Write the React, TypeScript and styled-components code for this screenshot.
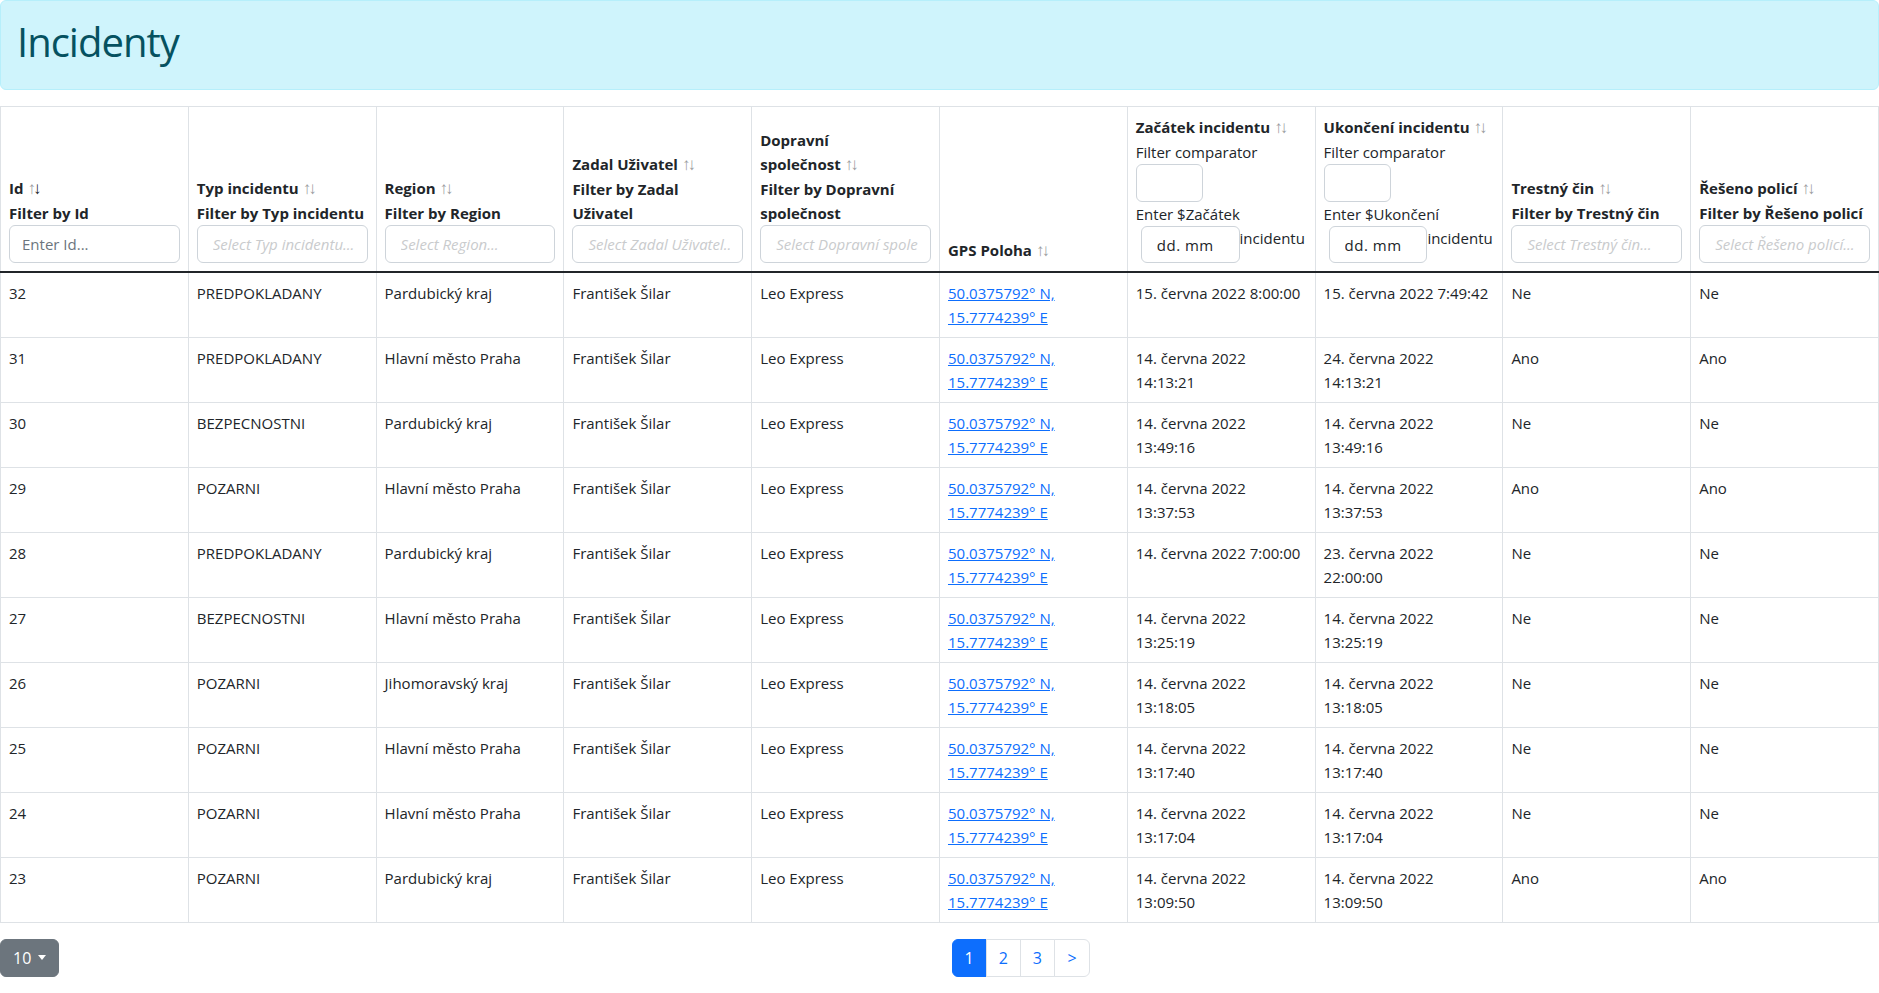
import styled, { createGlobalStyle } from 'styled-components';

const GlobalStyle = createGlobalStyle`
    * {
        box-sizing: border-box;
    }

    body {
        margin: 0;
        font-family: "Open Sans", "Noto Sans", sans-serif;
        color: #212529;
        background: #fff;
    }
`;

const Alert = styled.div`
    background: #cff4fc;
    border: 1px solid #b6effb;
    border-radius: 6px;
    padding: 17px 16px 15px;
    margin-bottom: 16px;
    color: #055160;
`;

const Title = styled.h1`
    margin: 0 0 8px;
    font-size: 40px;
    font-weight: 400;
    line-height: 1.2;
    letter-spacing: -1px;
`;

const Table = styled.table`
    width: 100%;
    table-layout: fixed;
    border-collapse: collapse;
    margin-bottom: 16px;
    font-size: 15px;
    line-height: 24px;
    border: 1px solid #dee2e6;
`;

const Th = styled.th`
    vertical-align: bottom;
    text-align: left;
    padding: 8px;
    border: 1px solid #dee2e6;
    border-bottom: 2px solid #212529;
    font-weight: 700;
`;

const Td = styled.td`
    vertical-align: top;
    padding: 8px;
    border: 1px solid #dee2e6;
`;

const Line = styled.span`
    display: block;
`;

const Caret = styled.span<{ $active?: boolean }>`
    font-family: "Liberation Sans", sans-serif;
    font-weight: 400;
    font-size: 17px;

    &::before {
        content: "\\2191";
        margin-left: 4px;
        opacity: 0.45;
    }

    &::after {
        content: "\\2193";
        margin-left: -3px;
        opacity: ${(p) => (p.$active ? 1 : 0.45)};
    }
`;

const TextInput = styled.input`
    display: block;
    width: 100%;
    height: 38px;
    padding: 6px 12px;
    font-family: inherit;
    font-size: 15px;
    font-weight: 400;
    color: #212529;
    border: 1px solid #ced4da;
    border-radius: 6px;
    background: #fff;

    &::placeholder {
        color: #6c757d;
    }
`;

const SelectBox = styled.div`
    height: 38px;
    padding: 6px 12px 6px 15px;
    border: 1px solid #ced4da;
    border-radius: 6px;
    font-weight: 400;
    font-style: italic;
    color: #c9cbcd;
`;

const SelectText = styled.span`
    display: block;
    white-space: nowrap;
    overflow: hidden;
`;

const DateFilter = styled.div`
    font-weight: 400;
`;

const Comparator = styled.div`
    width: 67px;
    height: 38px;
    border: 1px solid #ced4da;
    border-radius: 6px;
`;

const DateRow = styled.div`
    display: flex;
    align-items: flex-start;
    white-space: nowrap;
`;

const DateInput = styled.div`
    flex: none;
    width: calc(100% - 72px);
    height: 37px;
    margin-left: 5px;
    padding: 6px 0 6px 15px;
    border: 1px solid #ced4da;
    border-radius: 6px;
    color: #212529;
`;

const DateMask = styled.span`
    display: block;
    width: 56px;
    overflow: hidden;
    white-space: nowrap;
    letter-spacing: 0.5px;
`;

const Link = styled.a`
    color: #0d6efd;
    text-decoration: underline;
`;

const Footer = styled.div`
    display: grid;
    grid-template-columns: 1fr 1fr;
    font-size: 16px;
    line-height: 24px;
`;

const FooterCol = styled.div<{ $side: 'left' | 'right' }>`
    padding-${(p) => (p.$side === 'left' ? 'right' : 'left')}: 12px;
`;

const SizeButton = styled.button`
    display: inline-flex;
    align-items: center;
    height: 38px;
    padding: 6px 12px;
    font-family: inherit;
    font-size: 16px;
    line-height: 24px;
    color: #fff;
    background: #6c757d;
    border: 1px solid #6c757d;
    border-radius: 6px;

    &::after {
        content: '';
        margin-left: 7px;
        margin-top: -2px;
        border-top: 5px solid #fff;
        border-left: 4.5px solid transparent;
        border-right: 4.5px solid transparent;
    }
`;

const Pages = styled.ul`
    display: flex;
    list-style: none;
    margin: 0;
    padding: 0;
`;

const PageLink = styled.li<{ $active?: boolean }>`
    padding: 6px 12px;
    margin-left: -1px;
    min-width: 34px;
    text-align: center;
    border: 1px solid ${(p) => (p.$active ? '#0d6efd' : '#dee2e6')};
    background: ${(p) => (p.$active ? '#0d6efd' : '#fff')};
    color: ${(p) => (p.$active ? '#fff' : '#0d6efd')};

    &:first-child {
        margin-left: 0;
        border-radius: 6px 0 0 6px;
    }

    &:last-child {
        min-width: 36px;
        border-radius: 0 6px 6px 0;
    }
`;

type Column = {
    title: string[];
    label?: string[];
    text?: string;
    select?: string;
    date?: string;
    active?: boolean;
};

const columns: Column[] = [
    { title: ['Id'], label: ['Filter by Id'], text: 'Enter Id...', active: true },
    { title: ['Typ incidentu'], label: ['Filter by Typ incidentu'], select: 'Select Typ incidentu...' },
    { title: ['Region'], label: ['Filter by Region'], select: 'Select Region...' },
    { title: ['Zadal Uživatel'], label: ['Filter by Zadal', 'Uživatel'], select: 'Select Zadal Uživatel...' },
    {
        title: ['Dopravní', 'společnost'],
        label: ['Filter by Dopravní', 'společnost'],
        select: 'Select Dopravní společnost...',
    },
    { title: ['GPS Poloha'] },
    { title: ['Začátek incidentu'], date: 'Začátek' },
    { title: ['Ukončení incidentu'], date: 'Ukončení' },
    { title: ['Trestný čin'], label: ['Filter by Trestný čin'], select: 'Select Trestný čin...' },
    { title: ['Řešeno policí'], label: ['Filter by Řešeno policí'], select: 'Select Řešeno policí...' },
];

type Row = [number, string, string, string, string, boolean];

const rows: Row[] = [
    [32, 'PREDPOKLADANY', 'Pardubický kraj', '15. června 2022 8:00:00', '15. června 2022 7:49:42', false],
    [31, 'PREDPOKLADANY', 'Hlavní město Praha', '14. června 2022 14:13:21', '24. června 2022 14:13:21', true],
    [30, 'BEZPECNOSTNI', 'Pardubický kraj', '14. června 2022 13:49:16', '14. června 2022 13:49:16', false],
    [29, 'POZARNI', 'Hlavní město Praha', '14. června 2022 13:37:53', '14. června 2022 13:37:53', true],
    [28, 'PREDPOKLADANY', 'Pardubický kraj', '14. června 2022 7:00:00', '23. června 2022 22:00:00', false],
    [27, 'BEZPECNOSTNI', 'Hlavní město Praha', '14. června 2022 13:25:19', '14. června 2022 13:25:19', false],
    [26, 'POZARNI', 'Jihomoravský kraj', '14. června 2022 13:18:05', '14. června 2022 13:18:05', false],
    [25, 'POZARNI', 'Hlavní město Praha', '14. června 2022 13:17:40', '14. června 2022 13:17:40', false],
    [24, 'POZARNI', 'Hlavní město Praha', '14. června 2022 13:17:04', '14. června 2022 13:17:04', false],
    [23, 'POZARNI', 'Pardubický kraj', '14. června 2022 13:09:50', '14. června 2022 13:09:50', true],
];

function Lines({ lines }: { lines: string[] }) {
    return (
        <>
            {lines.map((l, i) => (i < lines.length - 1 ? <Line key={i}>{l}</Line> : <span key={i}>{l}</span>))}
        </>
    );
}

function DateTime({ value }: { value: string }) {
    const i = value.lastIndexOf(' ');
    const time = value.slice(i + 1);
    return (
        <>
            {value.slice(0, i)}
            {time.length > 7 ? <br /> : ' '}
            {time}
        </>
    );
}

function HeaderCell({ col }: { col: Column }) {
    return (
        <Th>
            <div>
                <Lines lines={col.title} />
                <Caret $active={col.active} />
            </div>
            {col.label && (
                <div>
                    {col.label.map((l) => (
                        <Line key={l}>{l}</Line>
                    ))}
                </div>
            )}
            {col.text && <TextInput placeholder={col.text} />}
            {col.select && (
                <SelectBox>
                    <SelectText>{col.select}</SelectText>
                </SelectBox>
            )}
            {col.date && (
                <DateFilter>
                    <Line>Filter comparator</Line>
                    <Comparator />
                    <Line>Enter ${col.date}</Line>
                    <DateRow>
                        <DateInput>
                            <DateMask>dd. mm. rrrr</DateMask>
                        </DateInput>
                        <span>incidentu</span>
                    </DateRow>
                </DateFilter>
            )}
        </Th>
    );
}

export default function App() {
    return (
        <>
            <GlobalStyle />
            <Alert>
                <Title>Incidenty</Title>
            </Alert>
            <Table>
                <thead>
                    <tr>
                        {columns.map((c) => (
                            <HeaderCell key={c.title.join(' ')} col={c} />
                        ))}
                    </tr>
                </thead>
                <tbody>
                    {rows.map(([id, type, region, start, end, crime]) => (
                        <tr key={id}>
                            <Td>{id}</Td>
                            <Td>{type}</Td>
                            <Td>{region}</Td>
                            <Td>František Šilar</Td>
                            <Td>Leo Express</Td>
                            <Td>
                                <Link href="#">50.0375792° N, 15.7774239° E</Link>
                            </Td>
                            <Td>
                                <DateTime value={start} />
                            </Td>
                            <Td>
                                <DateTime value={end} />
                            </Td>
                            <Td>{crime ? 'Ano' : 'Ne'}</Td>
                            <Td>{crime ? 'Ano' : 'Ne'}</Td>
                        </tr>
                    ))}
                </tbody>
            </Table>
            <Footer>
                <FooterCol $side="left">
                    <SizeButton>10</SizeButton>
                </FooterCol>
                <FooterCol $side="right">
                    <Pages>
                        <PageLink $active>1</PageLink>
                        <PageLink>2</PageLink>
                        <PageLink>3</PageLink>
                        <PageLink>&gt;</PageLink>
                    </Pages>
                </FooterCol>
            </Footer>
        </>
    );
}
